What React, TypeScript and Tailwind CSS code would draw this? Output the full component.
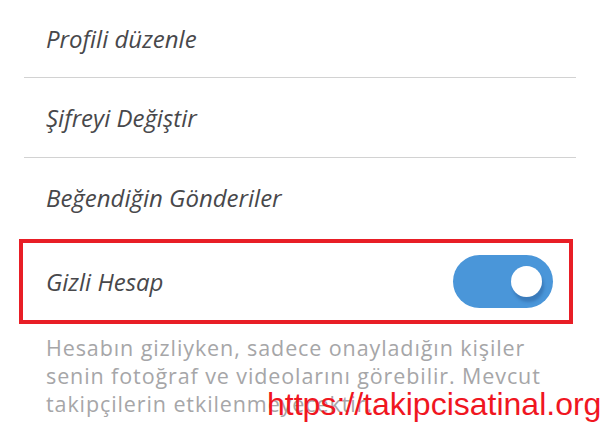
export default function App() {
  const rows = ['Profili düzenle', 'Şifreyi Değiştir', 'Beğendiğin Gönderiler'];

  return (
    <div
      className="relative h-[423px] w-[600px] overflow-hidden bg-white"
      style={{ fontFamily: '"Open Sans", "Noto Sans", sans-serif' }}
    >
      <div className="mx-[24px]">
        {rows.map((label, i) => (
          <div
            key={label}
            className={`flex items-center pl-[22px] text-[24px] italic text-[#48484b] ${
              i === 0 ? 'h-[78px]' : 'h-[80px]'
            } ${i < 2 ? 'border-b-[1.5px] border-[#d2d2d2]' : ''}`}
          >
            {label}
          </div>
        ))}
      </div>

      <div className="ml-[19px] mr-[27px] mt-[1px] flex h-[85px] items-center justify-between border-4 border-[#e81e26] pl-[23px] pr-[16px]">
        <span className="text-[24px] italic text-[#48484b]">Gizli Hesap</span>
        <div className="flex h-[53px] w-[100px] items-center justify-end rounded-full bg-[#4a96d9] pr-[11px]">
          <div className="h-[31px] w-[31px] rounded-full bg-white shadow-[2px_5px_3px_rgba(40,90,150,0.45)]" />
        </div>
      </div>

      <p className="ml-[46px] mt-[10px] whitespace-nowrap text-[21.5px] leading-[28px] tracking-[0.9px] text-[#a6a6a8]">
        Hesabın gizliyken, sadece onayladığın kişiler
        <br />
        senin fotoğraf ve videolarını görebilir. Mevcut
        <br />
        takipçilerin etkilenmeyecektir.
      </p>

      <div
        className="absolute left-[267px] top-[384px] whitespace-nowrap text-[32px] leading-[40px] text-[#f0161f]"
        style={{ fontFamily: '"Liberation Sans", Arial, sans-serif' }}
      >
        https://takipcisatinal.org
      </div>
    </div>
  );
}
